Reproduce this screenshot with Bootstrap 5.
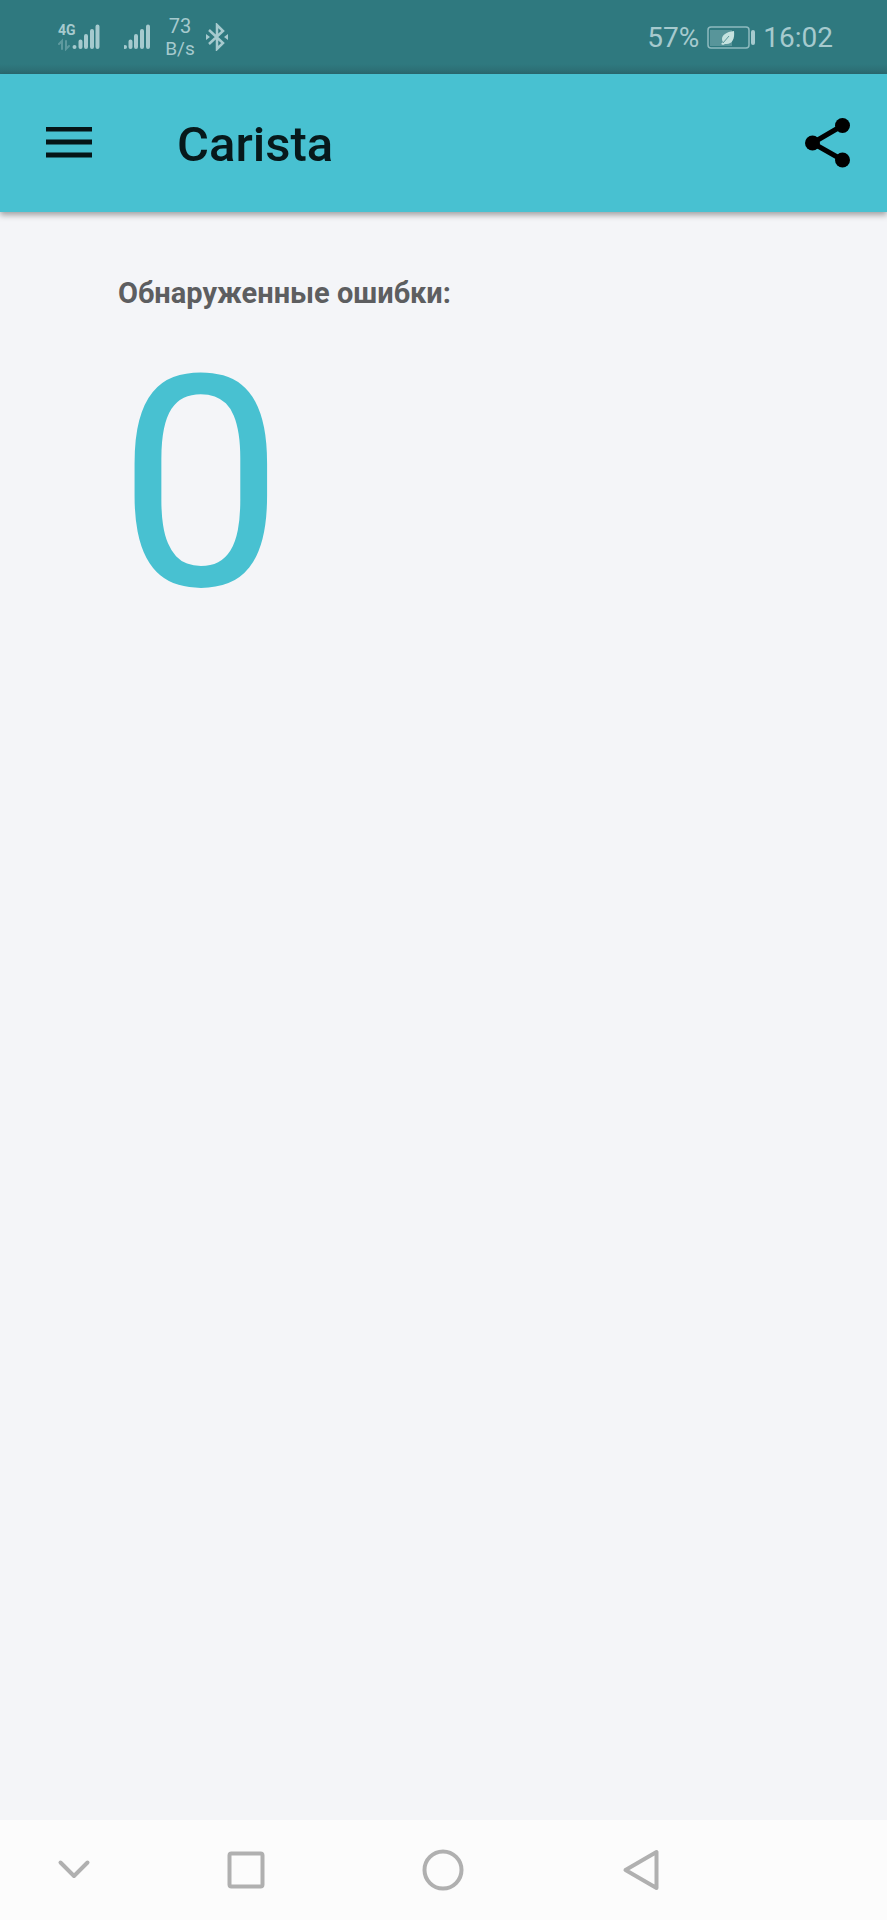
<!DOCTYPE html>
<html lang="ru">
<head>
<meta charset="utf-8">
<meta name="viewport" content="width=device-width, initial-scale=1">
<title>Carista</title>
<link href="https://cdn.jsdelivr.net/npm/bootstrap@5.3.0/dist/css/bootstrap.min.css" rel="stylesheet">
<style>
body { font-family: Roboto, "Noto Sans", sans-serif; background: #f4f5f8; }
svg { display: block; flex: none; }
.status-bar { height: 74px; padding: 0 54px 0 56px; background: linear-gradient(#2f797f 0 64px, #2b6a70); color: #a6cace; }
.clock-text { font-size: 28px; line-height: 32px; padding-top: 2px; }
.speed { font-size: 20px; line-height: 22px; width: 32px; margin: 0 10px 0 12px; }
.speed small { font-size: 19px; }
.network { width: 44px; height: 28px; }
.network-type { font: bold 14px/14px "Liberation Sans Narrow", Roboto, sans-serif; padding-left: 2px; }
.app-bar { height: 138px; padding: 0 36px 0 27px; background: #48c1d1; box-shadow: 0 3px 6px rgba(0,0,0,.35); }
.app-title { font-size: 49px; line-height: 56px; font-weight: 500; color: #07191b; padding: 4px 0 0 18px; }
.report { padding: 64px 118px; }
.report-title { font-size: 29px; line-height: 34px; font-weight: 700; color: #5d5e60; }
.fault-count { font-size: 295px; line-height: 348px; color: #48c1d1; }
.system-nav { height: 100px; background: #fcfcfc; color: #b0b0b0; }
.nav-side { flex: 3 1 0; }
.nav-main { flex: 4 1 0; }
</style>
</head>
<body>
<div class="d-flex flex-column min-vh-100">
  <div class="status-bar d-flex align-items-center justify-content-between">
    <div class="d-flex align-items-center">
      <div class="network position-relative">
        <span class="network-type position-absolute top-0 start-0">4G</span>
        <svg width="44" height="28" viewBox="0 0 44 28" fill="none" stroke="currentColor" stroke-width="4" stroke-linecap="round" aria-hidden="true">
          <path d="M18.500 24v0M24.500 18.500v5.500M30 13v11M36 8v16M41.500 3.500v20.500"/>
          <path d="M3 21l3-3v8M10 18v8l3-3" stroke-width="2" opacity=".4"/>
        </svg>
      </div>
      <svg class="ms-4" width="28" height="28" viewBox="0 0 28 28" fill="none" stroke="currentColor" stroke-width="4" stroke-linecap="round" aria-hidden="true">
        <path d="M1 24v0M6.500 18.500v5.500M12 13v11M18 8v16M24 3.500v20.500"/>
      </svg>
      <div class="speed text-center">73<br><small>B/s</small></div>
      <svg width="22" height="28" viewBox="0 0 22 28" aria-label="Bluetooth">
        <path d="M3 7l14 13-6 6V2l6 6L3 21" fill="none" stroke="currentColor" stroke-width="2.500"/>
        <path d="M0 11l4 3-4 3zM22 11l-4 3 4 3z" fill="currentColor"/>
      </svg>
    </div>
    <div class="d-flex align-items-center clock-text">
      <span>57%</span>
      <svg class="ms-2 me-2" width="48" height="24" viewBox="0 0 48 24" aria-label="Battery">
        <rect x="1" y="1" width="41" height="21" rx="3" fill="none" stroke="currentColor" stroke-width="1.500" opacity=".8"/>
        <path d="M3 4h22v16H3z" fill="currentColor" opacity=".35"/>
        <path d="M27 5c-8 1-12 4-12 8 0 2 1 3 1 3l-2 2 2 1 2-1c7 1 10-5 9-13z" fill="#c5e2df"/>
        <path d="M16 17l6-7" stroke="#5b969a"/>
        <path d="M46 6v11" stroke="currentColor" stroke-width="4" stroke-linecap="round"/>
      </svg>
      <span>16:02</span>
    </div>
  </div>

  <header class="app-bar d-flex align-items-center">
    <button type="button" class="btn border-0 p-3" aria-label="Menu">
      <svg width="52" height="32" viewBox="0 0 52 32"><path d="M3 2h46M3 15h46M3 28h46" stroke="#051517" stroke-width="5"/></svg>
    </button>
    <h1 class="app-title mb-0 ms-5">Carista</h1>
    <button type="button" class="btn border-0 p-0 ms-auto" aria-label="Share">
      <svg width="48" height="50" viewBox="0 0 48 50"><path d="M39.500 7.500l-30 17.500 30 17" fill="none" stroke="#000" stroke-width="5"/><circle cx="39.500" cy="7.500" r="7.500"/><circle cx="9.500" cy="25" r="7.500"/><circle cx="39.500" cy="42" r="7.500"/></svg>
    </button>
  </header>

  <main class="report flex-grow-1">
    <h2 class="report-title mb-0">Обнаруженные ошибки:</h2>
    <div class="fault-count">0</div>
  </main>

  <nav class="system-nav d-flex align-items-center" aria-label="System">
    <button type="button" class="nav-side btn border-0 p-0 d-flex justify-content-center" aria-label="Hide">
      <svg width="34" height="42" viewBox="0 0 34 42" fill="none" stroke="#b0b0b0" stroke-width="4" stroke-linecap="round" stroke-linejoin="round"><path d="M3.500 13.500L17 27l13.500-13.500"/></svg>
    </button>
    <button type="button" class="nav-main btn border-0 p-0 d-flex justify-content-center" aria-label="Recent">
      <svg width="38" height="42" viewBox="0 0 38 42" fill="none" stroke="#b0b0b0" stroke-width="4"><rect x="2.500" y="4.500" width="33" height="33" rx="2"/></svg>
    </button>
    <button type="button" class="nav-main btn border-0 p-0 d-flex justify-content-center" aria-label="Home">
      <svg width="42" height="42" viewBox="0 0 42 42" fill="none" stroke="#b0b0b0" stroke-width="4"><circle cx="21" cy="21" r="18.500"/></svg>
    </button>
    <button type="button" class="nav-main btn border-0 p-0 d-flex justify-content-center" aria-label="Back">
      <svg width="38" height="42" viewBox="0 0 38 42" fill="none" stroke="#b0b0b0" stroke-width="4" stroke-linejoin="round"><path d="M34.500 3v36L3.500 21z"/></svg>
    </button>
    <div class="nav-side"></div>
  </nav>
</div>
<script src="https://cdn.jsdelivr.net/npm/bootstrap@5.3.0/dist/js/bootstrap.bundle.min.js"></script>
</body>
</html>
